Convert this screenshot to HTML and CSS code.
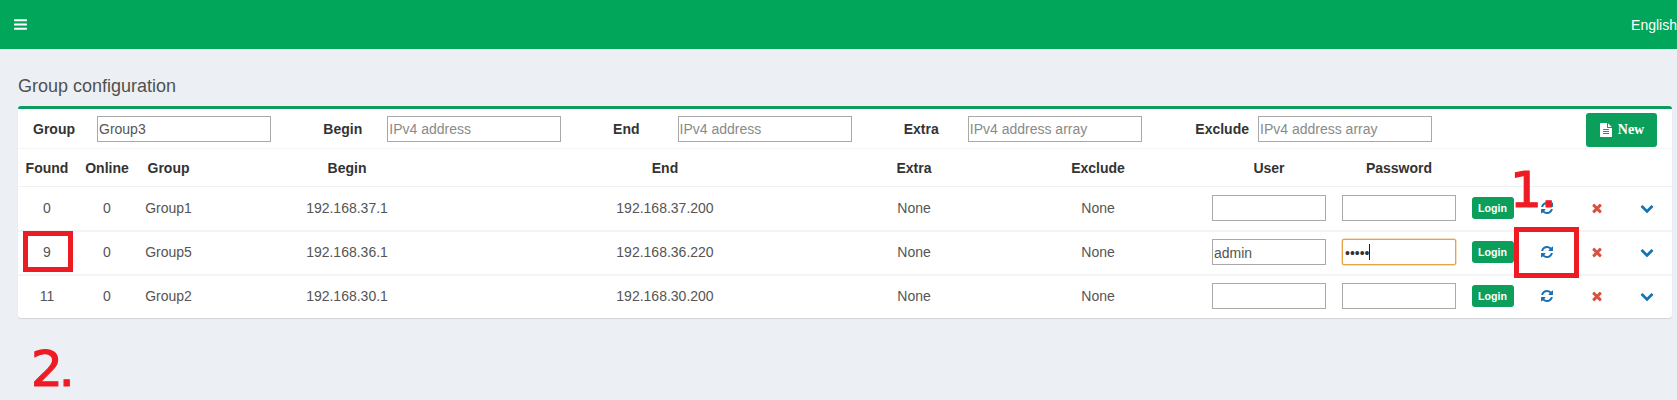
FILE: index.html
```html
<!DOCTYPE html>
<html lang="en">
<head>
<meta charset="utf-8">
<title>Group configuration</title>
<link rel="stylesheet" href="styles.css">
</head>
<body>
<svg class="defs" aria-hidden="true">
  <symbol id="i-bars" viewBox="0 0 1792 1792"><path d="M1664 1344v128q0 26-19 45t-45 19h-1408q-26 0-45-19t-19-45v-128q0-26 19-45t45-19h1408q26 0 45 19t19 45zm0-512v128q0 26-19 45t-45 19h-1408q-26 0-45-19t-19-45v-128q0-26 19-45t45-19h1408q26 0 45 19t19 45zm0-512v128q0 26-19 45t-45 19h-1408q-26 0-45-19t-19-45v-128q0-26 19-45t45-19h1408q26 0 45 19t19 45z"/></symbol>
  <symbol id="i-file" viewBox="0 0 1792 1792"><path d="M1596 476q14 14 28 36h-472v-472q22 14 36 28zm-476 164h544v1056q0 40-28 68t-68 28h-1344q-40 0-68-28t-28-68v-1600q0-40 28-68t68-28h800v544q0 40 28 68t68 28zm160 736v-64q0-14-9-23t-23-9h-704q-14 0-23 9t-9 23v64q0 14 9 23t23 9h704q14 0 23-9t9-23zm0-256v-64q0-14-9-23t-23-9h-704q-14 0-23 9t-9 23v64q0 14 9 23t23 9h704q14 0 23-9t9-23zm0-256v-64q0-14-9-23t-23-9h-704q-14 0-23 9t-9 23v64q0 14 9 23t23 9h704q14 0 23-9t9-23z"/></symbol>
  <symbol id="i-refresh" viewBox="0 0 1792 1792"><path d="M1639 1056q0 5-1 7-64 268-268 434.5t-478 166.5q-146 0-282.5-55t-243.5-157l-129 129q-19 19-45 19t-45-19-19-45v-448q0-26 19-45t45-19h448q26 0 45 19t19 45-19 45l-137 137q71 66 161 102t187 36q134 0 250-65t186-179q11-17 53-117 8-23 30-23h192q13 0 22.5 9.5t9.5 22.5zm25-800v448q0 26-19 45t-45 19h-448q-26 0-45-19t-19-45 19-45l138-138q-148-137-349-137-134 0-250 65t-186 179q-11 17-53 117-8 23-30 23h-199q-13 0-22.5-9.5t-9.5-22.5v-7q65-268 270-434.5t480-166.5q146 0 284 55.5t245 156.5l130-129q19-19 45-19t45 19 19 45z"/></symbol>
  <symbol id="i-times" viewBox="0 0 1792 1792"><path d="M1490 1322q0 40-28 68l-136 136q-28 28-68 28t-68-28l-294-294-294 294q-28 28-68 28t-68-28l-136-136q-28-28-28-68t28-68l294-294-294-294q-28-28-28-68t28-68l136-136q28-28 68-28t68 28l294 294 294-294q28-28 68-28t68 28l136 136q28 28 28 68t-28 68l-294 294 294 294q28 28 28 68z"/></symbol>
  <symbol id="i-chevron" viewBox="0 0 1792 1792"><path d="M1683 808l-742 741q-19 19-45 19t-45-19l-742-741q-19-19-19-45.5t19-45.5l166-165q19-19 45-19t45 19l531 531 531-531q19-19 45-19t45 19l166 165q19 19 19 45.5t-19 45.5z"/></symbol>
</svg>

<header class="topbar">
  <svg class="icon-bars"><use href="#i-bars"/></svg>
  <span class="lang">English</span>
</header>

<main class="content">
  <h1 class="page-title">Group configuration</h1>
  <section class="card">
    <form class="filter-row">
      <div class="field"><label class="lbl lbl-group">Group</label><input class="txt txt-wide" type="text" value="Group3"></div>
      <div class="field"><label class="lbl lbl-begin">Begin</label><input class="txt txt-wide" type="text" placeholder="IPv4 address"></div>
      <div class="field"><label class="lbl lbl-end">End</label><input class="txt txt-wide" type="text" placeholder="IPv4 address"></div>
      <div class="field"><label class="lbl lbl-extra">Extra</label><input class="txt txt-wide" type="text" placeholder="IPv4 address array"></div>
      <div class="field"><label class="lbl lbl-exclude">Exclude</label><input class="txt txt-wide" type="text" placeholder="IPv4 address array"></div>
      <button class="btn-new" type="button"><svg class="icon-file"><use href="#i-file"/></svg>New</button>
    </form>
    <table class="grid">
      <colgroup>
        <col class="c-found"><col class="c-online"><col class="c-group"><col class="c-begin"><col class="c-end"><col class="c-extra"><col class="c-exclude"><col class="c-user"><col class="c-pass"><col class="c-login"><col class="c-act"><col class="c-act"><col class="c-act">
      </colgroup>
      <thead>
        <tr>
          <th>Found</th><th>Online</th><th>Group</th><th>Begin</th><th>End</th><th>Extra</th><th>Exclude</th><th>User</th><th>Password</th><th></th><th></th><th></th><th></th>
        </tr>
      </thead>
      <tbody>
        <tr>
          <td>0</td><td>0</td><td>Group1</td><td>192.168.37.1</td><td>192.168.37.200</td><td>None</td><td>None</td>
          <td><input class="txt txt-cell" type="text"></td>
          <td><input class="txt txt-cell" type="password"></td>
          <td><button class="btn-login" type="button">Login</button></td>
          <td><svg class="ico ico-blue"><use href="#i-refresh"/></svg></td>
          <td><svg class="ico ico-red"><use href="#i-times"/></svg></td>
          <td><svg class="ico ico-blue2"><use href="#i-chevron"/></svg></td>
        </tr>
        <tr>
          <td>9</td><td>0</td><td>Group5</td><td>192.168.36.1</td><td>192.168.36.220</td><td>None</td><td>None</td>
          <td><input class="txt txt-cell" type="text" value="admin"></td>
          <td><span class="focus-wrap"><input class="txt txt-cell txt-focus" type="password" value="admin"><i class="caret"></i></span></td>
          <td><button class="btn-login" type="button">Login</button></td>
          <td><svg class="ico ico-blue"><use href="#i-refresh"/></svg></td>
          <td><svg class="ico ico-red"><use href="#i-times"/></svg></td>
          <td><svg class="ico ico-blue2"><use href="#i-chevron"/></svg></td>
        </tr>
        <tr>
          <td>11</td><td>0</td><td>Group2</td><td>192.168.30.1</td><td>192.168.30.200</td><td>None</td><td>None</td>
          <td><input class="txt txt-cell" type="text"></td>
          <td><input class="txt txt-cell" type="password"></td>
          <td><button class="btn-login" type="button">Login</button></td>
          <td><svg class="ico ico-blue"><use href="#i-refresh"/></svg></td>
          <td><svg class="ico ico-red"><use href="#i-times"/></svg></td>
          <td><svg class="ico ico-blue2"><use href="#i-chevron"/></svg></td>
        </tr>
      </tbody>
    </table>
  </section>
</main>

<div class="mark-box mark-found"></div>
<div class="mark-box mark-refresh"></div>
<div class="mark-num mark-1">1.</div>
<div class="mark-num mark-2">2.</div>
</body>
</html>
```

FILE: styles.css
```css
* { box-sizing: border-box; }

html, body {
  margin: 0;
  height: 400px;
  overflow: hidden;
}

body {
  position: relative;
  background: #ecf0f5;
  font-family: "Liberation Sans", Arial, sans-serif;
  font-size: 14px;
  color: #555;
}

.defs { display: none; }

.topbar {
  height: 49px;
  background: #01a65b;
  display: flex;
  align-items: center;
  justify-content: space-between;
  padding: 0 0 0 13px;
  color: #fff;
  overflow: hidden;
}

.icon-bars { width: 15px; height: 15px; fill: #fff; }
.lang { font-size: 14px; }

.content { padding: 27px 5px 0 18px; }

.page-title {
  margin: 0 0 10px;
  font-size: 18px;
  line-height: 20px;
  font-weight: 400;
  color: #505050;
}

.card {
  background: #fff;
  border-top: 3px solid #0d9c5e;
  border-radius: 3px;
  box-shadow: 0 1px 1px rgba(0, 0, 0, .12);
}

.filter-row {
  height: 40px;
  display: grid;
  grid-template-columns: 272px repeat(4, 290.25px) 1fr;
  align-items: center;
  border-bottom: 1px solid #f4f4f4;
}

.field {
  display: flex;
  align-items: center;
  justify-content: flex-end;
  padding-right: 19px;
}

.lbl { font-weight: 700; color: #333; }
.lbl-group { margin-right: 22px; }
.lbl-begin { margin-right: 25px; }
.lbl-end { margin-right: 38px; }
.lbl-extra { margin-right: 29px; }
.lbl-exclude { margin-right: 9px; }

.txt {
  height: 26px;
  padding: 1px 1px 0;
  border: 1px solid #a9a9a9;
  border-radius: 0;
  background: #fff;
  font: 14px "Liberation Sans", Arial, sans-serif;
  color: #555;
  outline: none;
}

.txt::placeholder { color: #8a8a8a; }
.txt-wide { width: 174px; }
.txt-cell { width: 114px; display: block; margin: 0 auto; }
.txt-focus {
  border-color: #e5a544;
  border-radius: 2px;
  box-shadow: 0 0 0 .5px rgba(229, 165, 68, .7);
  color: #333;
  padding-left: 2px;
}

.focus-wrap { position: relative; display: block; width: 114px; margin: 0 auto; }

.caret {
  position: absolute;
  left: 27px;
  top: 5px;
  width: 1px;
  height: 16px;
  background: #222;
}

.btn-new {
  justify-self: end;
  margin: 2px 15px 0 0;
  width: 71px;
  height: 34px;
  display: flex;
  align-items: center;
  justify-content: center;
  gap: 5px;
  padding: 0;
  border: 0;
  border-radius: 3px;
  background: #0c9f5c;
  color: #fff;
  font: 700 14px "Liberation Serif", "Times New Roman", serif;
}

.icon-file { width: 14px; height: 14px; fill: #fff; }

.grid {
  width: 100%;
  table-layout: fixed;
  border-collapse: separate;
  border-spacing: 0;
}

.c-found { width: 58px; }
.c-online { width: 62px; }
.c-group { width: 61px; }
.c-begin { width: 296px; }
.c-end { width: 340px; }
.c-extra { width: 158px; }
.c-exclude { width: 210px; }
.c-user { width: 132px; }
.c-pass { width: 128px; }
.c-login { width: 59px; }
.c-act { width: 50px; }

.grid th, .grid td {
  padding: 0;
  text-align: center;
  vertical-align: middle;
}

.grid th { height: 37px; font-weight: 700; color: #333; }

.grid td {
  height: 44px;
  padding-bottom: 1px;
  border-top: 1px solid #f1f1f1;
}

.grid tr + tr td {
  padding-bottom: 2px;
  border-top: 2px solid #f4f4f4;
}

.btn-login {
  display: block;
  margin: 0 auto;
  width: 42px;
  height: 22px;
  padding: 0;
  border: 0;
  border-radius: 3px;
  background: #0c9f5c;
  color: #fff;
  font: 700 10.6px "Liberation Sans", Arial, sans-serif;
}

.ico { display: block; margin: 0 auto; width: 14px; height: 14px; }
.ico-blue { fill: #1b6fb5; }
.ico-blue2 { fill: #1474b4; }
.ico-red { fill: #d9513f; }

.mark-box {
  position: absolute;
  border: 5px solid #ed1c24;
}

.mark-found { left: 23px; top: 231px; width: 50px; height: 41px; }
.mark-refresh { left: 1514px; top: 227px; width: 65px; height: 51px; }

.mark-num {
  position: absolute;
  font-family: "DejaVu Sans", sans-serif;
  color: #ed1c24;
  line-height: 1;
  white-space: nowrap;
  -webkit-text-stroke: 1.2px #ed1c24;
}

.mark-1 { left: 1510px; top: 165px; font-size: 50px; letter-spacing: -1px; }
.mark-2 { left: 31px; top: 344px; font-size: 50px; letter-spacing: -4px; }
```
